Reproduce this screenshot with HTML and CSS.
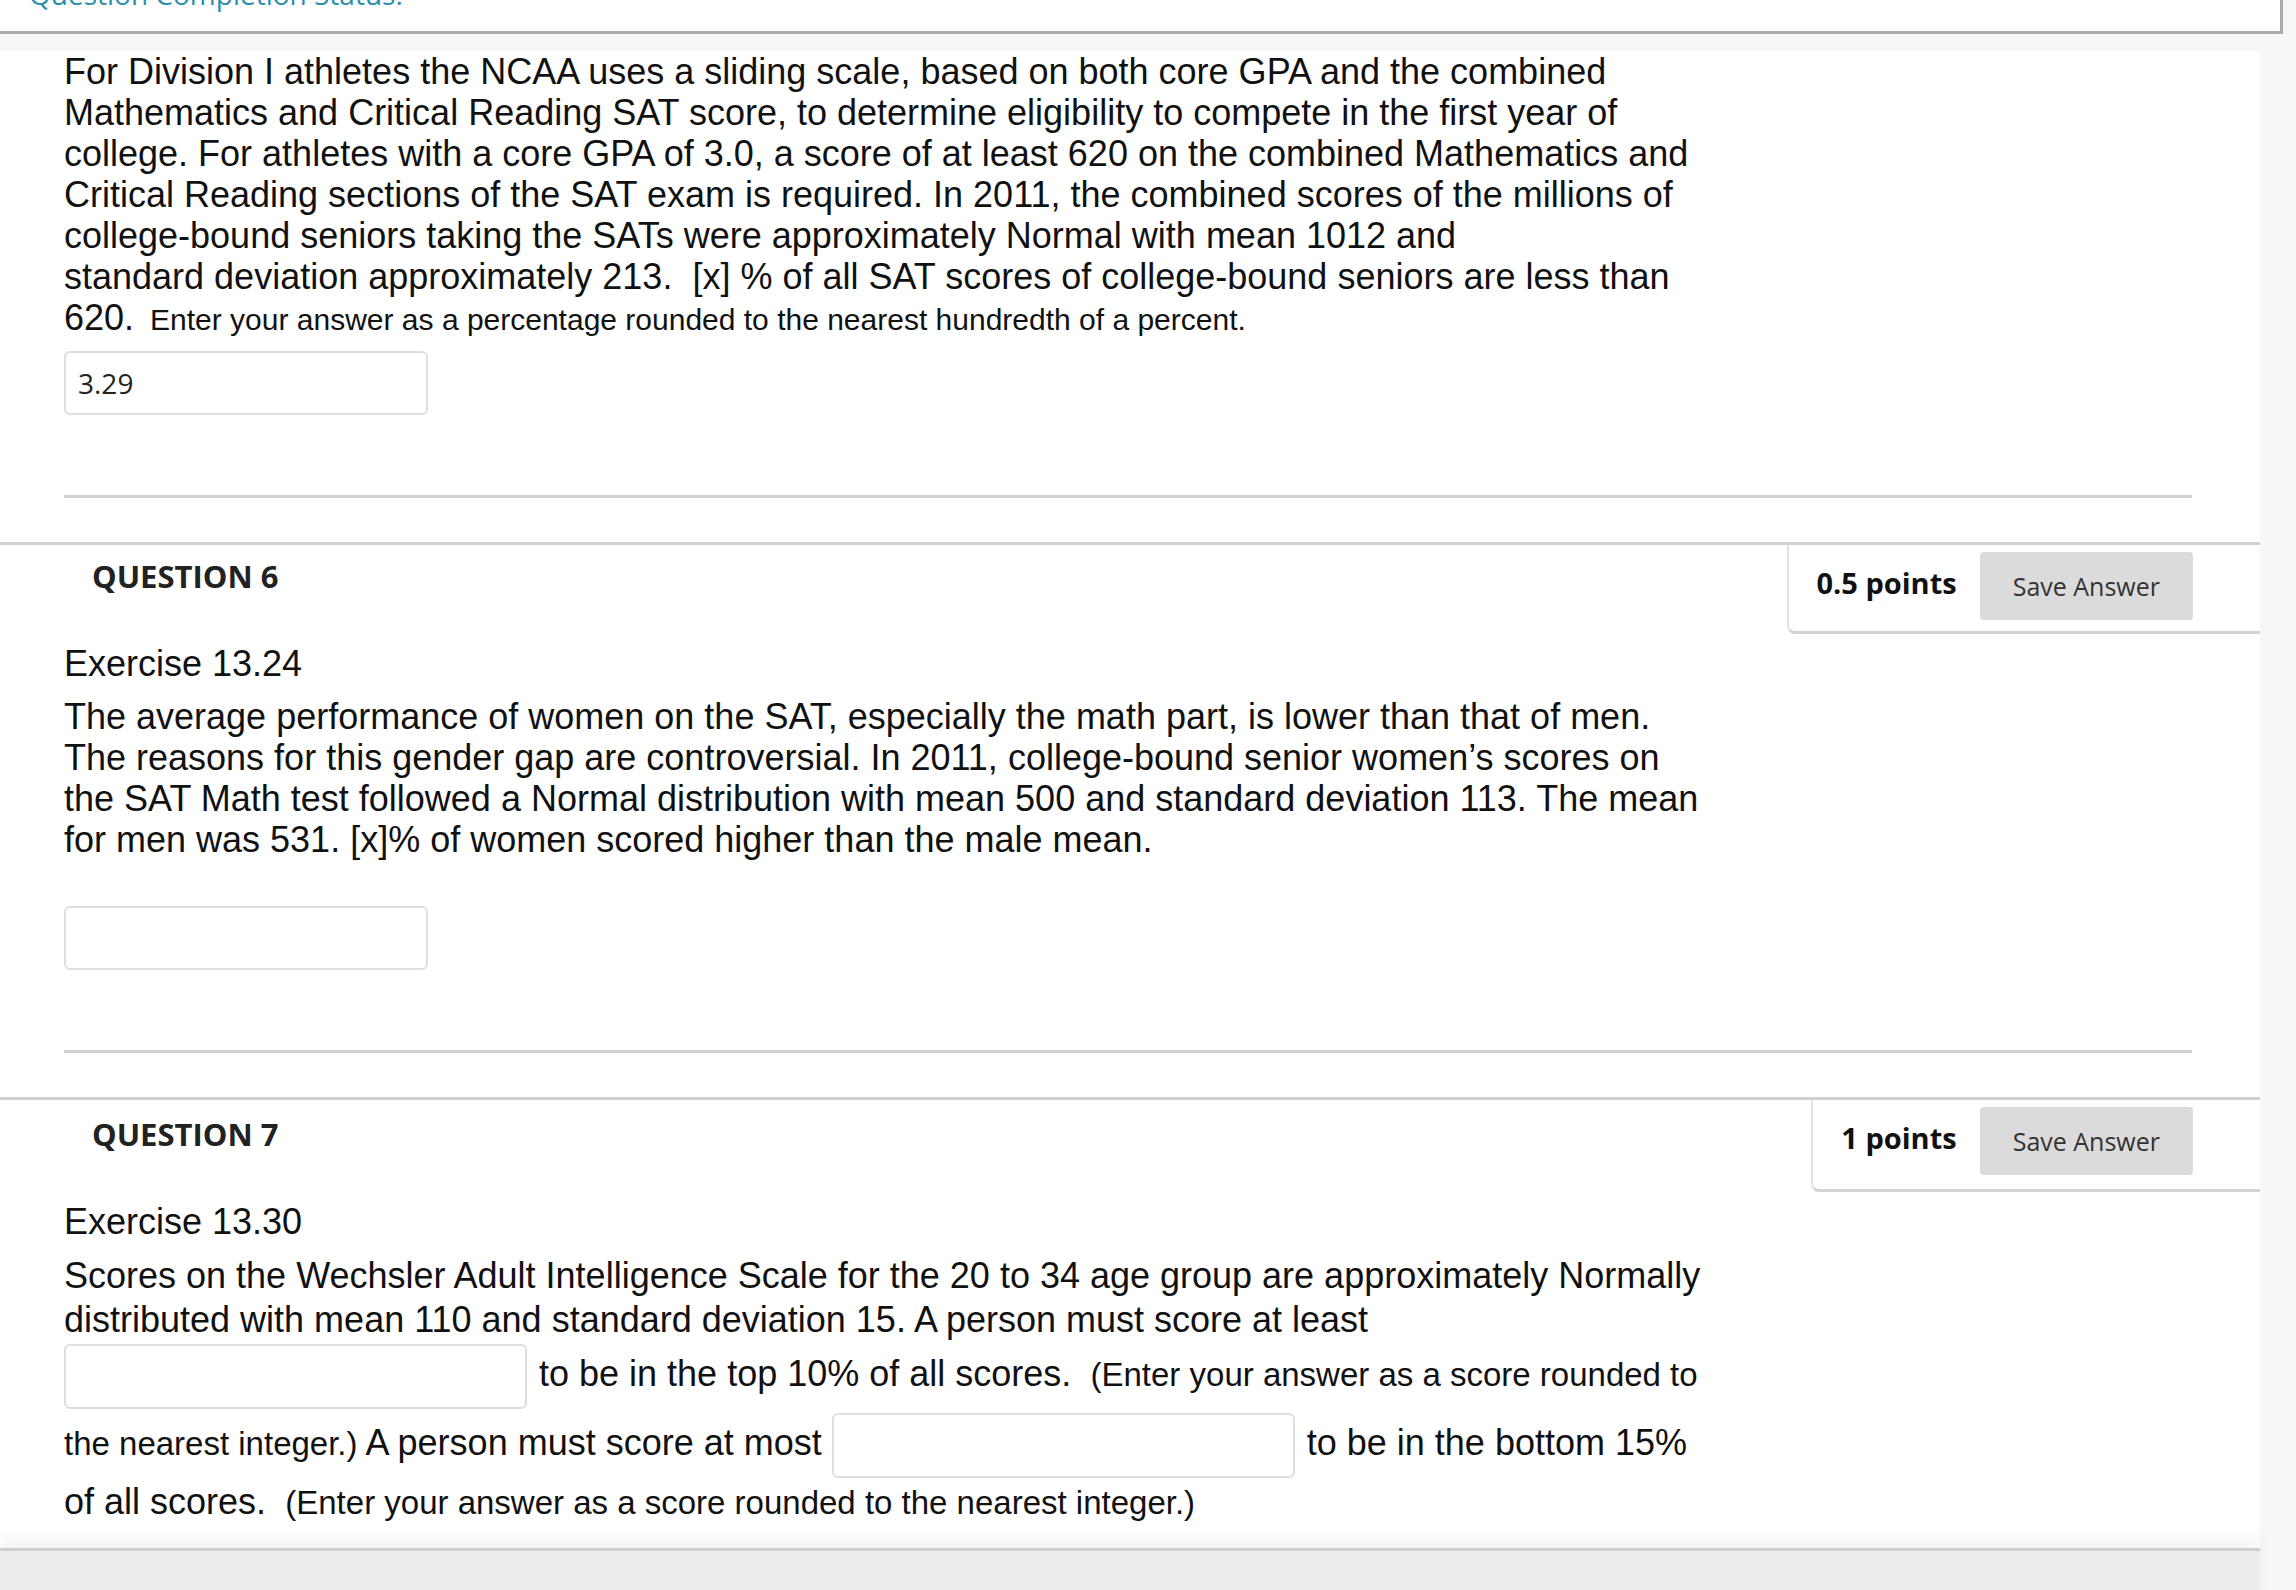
FILE: index.html
```html
<!DOCTYPE html>
<html>
<head>
	<title>Take Test</title>
	<link rel="stylesheet" href="styles.css">
</head>
<body>

	<div class="status">
		<span class="status-label"><span class="caret"></span>Question Completion Status:</span>
	</div>

	<div class="page">

		<div class="q-body first">
			<p class="text">For Division I athletes the NCAA uses a sliding scale, based on both core GPA and the combined Mathematics and Critical Reading SAT score, to determine eligibility to compete in the first year of college. For athletes with a core GPA of 3.0, a score of at least 620 on the combined Mathematics and Critical Reading sections of the SAT exam is required. In 2011, the combined scores of the millions of college-bound seniors taking the SATs were approximately Normal with mean 1012 and<br>standard deviation approximately 213.&nbsp; [x] % of all SAT scores of college-bound seniors are less than 620.&nbsp;<span class="note">Enter your answer as a percentage rounded to the nearest hundredth of a percent.</span></p>
			<input class="answer near" type="text" value="3.29">
			<hr class="rule">
		</div>

		<div class="question">
			<div class="q-head">
				<h3 class="q-title">QUESTION 6</h3>
				<div class="points">
					<b>0.5 points</b>
					<button class="save">Save Answer</button>
				</div>
			</div>
			<div class="q-body">
				<p class="title">Exercise 13.24</p>
				<p class="text">The average performance of women on the SAT, especially the math part, is lower than that of men. The reasons for this gender gap are controversial. In 2011, college-bound senior women’s scores on the SAT Math test followed a Normal distribution with mean 500 and standard deviation 113. The mean for men was 531. [x]% of women scored higher than the male mean.</p>
				<input class="answer far" type="text" value="">
				<hr class="rule">
			</div>
		</div>

		<div class="question last">
			<div class="q-head">
				<h3 class="q-title">QUESTION 7</h3>
				<div class="points">
					<b>1 points</b>
					<button class="save">Save Answer</button>
				</div>
			</div>
			<div class="q-body">
				<p class="title">Exercise 13.30</p>
				<p class="text wais">Scores on the Wechsler Adult Intelligence Scale for the 20 to 34 age group are approximately Normally distributed with mean 110 and standard deviation 15. A person must score at least <input class="blank" type="text"> to be in the top 10% of all scores.&nbsp;<span class="hint"> (Enter your answer as a score rounded to the nearest integer.)</span> A person must score at most <input class="blank" type="text"> to be in the bottom 15% of all scores.&nbsp;<span class="hint"> (Enter your answer as a score rounded to the nearest integer.)</span></p>
			</div>
		</div>

		<div class="footer"></div>

	</div>

</body>
</html>
```

FILE: styles.css
```css
body {margin:0;background:#f7f7f7;font-family:"Liberation Sans", Arial, sans-serif;color:#111;}

.status {width:2280px;height:31px;overflow:hidden;background:#fff;border-right:3px solid #aaa;border-bottom:3px solid #aaa;}
.status-label {display:block;margin-top:-20px;padding-left:3px;font:normal 28px/28px "Open Sans", sans-serif;color:#2b8fab;}
.status .caret {display:inline-block;width:0;height:0;border-top:6px solid #999;border-left:5px solid transparent;border-right:5px solid transparent;margin-right:16px;vertical-align:6px;}

.page {width:2260px;background:#fff;}

.question {border-top:3px solid #d0d0d0;}
.question.last {padding-bottom:23px;}

.q-head {display:flex;align-items:flex-start;}
.q-title {margin:11px 0 0 92px;font:bold 31px/40px "Open Sans", sans-serif;color:#222;}
.last .q-title {margin-top:14px;}
.points {margin-left:auto;display:flex;align-items:center;gap:23px;padding:7px 67px 11px 28px;border-left:2px solid #e2e2e2;border-bottom:3px solid #d3d3d3;border-bottom-left-radius:8px;}
.last .points {padding-bottom:14px;}
.points b {margin-bottom:7px;font:bold 29px/40px "Open Sans", sans-serif;color:#111;}
.save {height:68px;padding:0 33px;border:0;border-radius:4px;background:#dbdbdb;font:normal 25px "Open Sans", sans-serif;color:#333;}

.q-body {padding:0 68px 0 64px;}
.title {margin:9px 0 0;font-size:36px;line-height:41px;}
.text {margin:12px 0 0;max-width:1646px;font-size:36px;line-height:41px;}
.first .text {margin-top:17px;}
.text .note {margin-left:6px;font-size:30px;}
.text.wais {line-height:44px;}
.text .hint {font-size:33px;}

.answer {display:block;box-sizing:border-box;width:364px;height:64px;padding:0 12px;border:2px solid #dedede;border-radius:6px;font:normal 28px "Open Sans", sans-serif;color:#222;background:#fff;}
.answer.near {margin-top:11px;}
.answer.far {margin-top:46px;}
.blank {box-sizing:border-box;width:463px;height:65px;margin:2px 2px 2px 0;vertical-align:middle;border:2px solid #dedede;border-radius:6px;background:#fff;font:normal 28px "Open Sans", sans-serif;}

.rule {height:3px;margin:80px 0 44px;border:0;background:#d0d0d0;}

.footer {height:60px;border-top:3px solid #cfcfcf;background:#ededed;box-shadow:0 -8px 14px rgba(0,0,0,0.05);}
```
